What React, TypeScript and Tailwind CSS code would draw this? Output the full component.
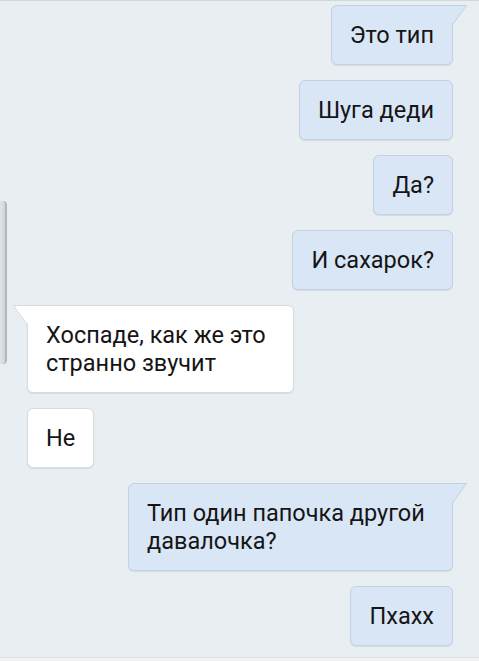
import React from "react";

type Msg = { text: string; out: boolean; tail?: boolean; width?: string };

const MESSAGES: Msg[] = [
  { text: "Это тип", out: true, tail: true },
  { text: "Шуга деди", out: true },
  { text: "Да?", out: true },
  { text: "И сахарок?", out: true },
  { text: "Хоспаде, как же это странно звучит", out: false, tail: true, width: "w-[267px]" },
  { text: "Не", out: false },
  { text: "Тип один папочка другой давалочка?", out: true, tail: true, width: "w-[325px]" },
  { text: "Пхахх", out: true },
];

function Bubble({ msg }: { msg: Msg }) {
  const base = msg.out
    ? "bg-[#d9e6f6] border-[#c3d1e1]"
    : "bg-white border-[#d6dbe0]";
  const corner = msg.tail
    ? msg.out
      ? "rounded-md rounded-tr-none"
      : "rounded-md rounded-tl-none"
    : "rounded-md";
  return (
    <div className={`relative border ${base} ${corner} ${msg.width ?? ""} px-[18px] py-[15px] text-[23.5px] leading-[28px] text-[#151515] shadow-[0_1px_1px_rgba(60,80,100,0.12)]`}>
      {msg.text}
      {/* tail */}
      {msg.tail && msg.out && (
        <svg className="absolute -top-px -right-[15px]" width="16" height="22" viewBox="0 0 16 22">
          <polygon points="0,0.5 15.5,0.5 0,21" fill="#d9e6f6" />
          <polyline points="0,0.5 15.5,0.5 1,20.5" fill="none" stroke="#c3d1e1" strokeWidth="1" />
        </svg>
      )}
      {msg.tail && !msg.out && (
        <svg className="absolute -top-px -left-[15px]" width="16" height="22" viewBox="0 0 16 22">
          <polygon points="16,0.5 0.5,0.5 16,21" fill="#ffffff" />
          <polyline points="16,0.5 0.5,0.5 15,20.5" fill="none" stroke="#d6dbe0" strokeWidth="1" />
        </svg>
      )}
    </div>
  );
}

export default function App() {
  return (
    <div
      className="relative h-[661px] w-[479px] overflow-hidden bg-[#e9eef2] border-t border-[#d0d7de]"
      style={{ fontFamily: "Roboto, 'Noto Sans', sans-serif" }}
    >
      {/* edge of a panel peeking in from the left */}
      <div className="absolute left-0 top-[200px] h-[163px] w-[7px] rounded-r-[4px] border-r-2 border-[#b0b6ba] bg-gradient-to-r from-[#e1e5e8] to-[#cfd4d7]" />

      <div className="flex flex-col gap-[15px] pt-[4px]">
        {MESSAGES.map((m, i) => (
          <div
            key={i}
            className={m.out ? "flex justify-end pr-[26px]" : "flex justify-start pl-[27px]"}
          >
            <Bubble msg={m} />
          </div>
        ))}
      </div>

      <div className="absolute bottom-0 left-0 h-[4px] w-full border-t border-[#dde2e6] bg-[#f1f3f5]" />
    </div>
  );
}
